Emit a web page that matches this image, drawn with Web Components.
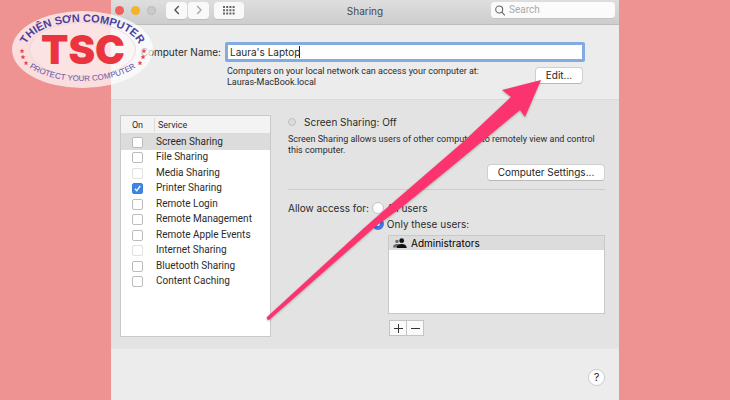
<!DOCTYPE html>
<html lang="en">
<head>
<meta charset="utf-8">
<title>Sharing</title>
<style>
  body { margin: 0; background: #ee9292; color: #2b2b2b; font: 10px/14px Inter, "Liberation Sans", sans-serif; --compact: Roboto, "Liberation Sans", sans-serif; }
</style>
</head>
<body>
<share-desktop></share-desktop>
<script>
const define = (name, html, setup) => customElements.define(name, class extends HTMLElement {
  constructor() {
    super();
    const t = document.createElement('template');
    t.innerHTML = html;
    const root = this.attachShadow({ mode: 'open' });
    root.append(t.content.cloneNode(true));
    if (setup) setup(root, this);
  }
});

define('push-button', `
<style>
  :host { display: inline-block; }
  button { box-sizing: border-box; width: 100%; height: 17px; padding: 0 9px; border: 1px solid #cfcfcf; border-bottom-color: #b9b9b9; border-radius: 4px; background: #fff; color: #1e1e1e; font: inherit; line-height: 15px; white-space: nowrap; }
</style>
<button type="button"><slot></slot></button>`);

define('title-bar', `
<style>
  :host { display: grid; grid-template-columns: 1fr auto 1fr; align-items: center; height: 24px; padding: 0 4px; border-bottom: 1px solid #bcbcbc; background: linear-gradient(#dedede, #cdcdcd); }
  .left { display: flex; align-items: center; padding-bottom: 3px; }
  .light { width: 9px; height: 9px; margin-right: 7px; border-radius: 50%; background: #f0605a; }
  .light.min { background: #f4b32f; }
  .light.off { box-sizing: border-box; background: #cbcbcb; border: 1px solid #b9b9b9; margin-right: 10px; }
  button { display: grid; place-items: center; box-sizing: border-box; height: 18px; width: 21px; padding: 0; border: 0; border-bottom: 1px solid #bdbdbd; border-radius: 4px; background: #f9f9f9; }
  button + button { margin-left: 1px; }
  button.grid { width: 30px; margin-left: 5px; }
  h1 { margin: 0; padding-bottom: 3px; font-size: 10px; font-weight: 400; color: #484848; }
  .search { justify-self: end; display: flex; align-items: center; gap: 4px; box-sizing: border-box; width: 124px; height: 17px; margin-bottom: 3px; padding: 0 4px; border-bottom: 1px solid #c4c4c4; border-radius: 4px; background: #fbfbfb; }
  input { flex: 1; min-width: 0; padding: 0; border: 0; outline: 0; background: none; font: inherit; font-family: var(--compact); }
  input::placeholder { color: #aaa; opacity: 1; }
</style>
<div class="left">
  <span class="light"></span><span class="light min"></span><span class="light off"></span>
  <button type="button" aria-label="Back"><svg width="8" height="12" viewBox="0 0 8 12" fill="none" stroke="#555" stroke-width="1.4"><path d="M5.8 2 2 6l3.8 4"/></svg></button>
  <button type="button" aria-label="Forward"><svg width="8" height="12" viewBox="0 0 8 12" fill="none" stroke="#a5a5a5" stroke-width="1.3"><path d="M2.2 2 6 6l-3.8 4"/></svg></button>
  <button type="button" class="grid" aria-label="Show all"><svg width="12" height="9" viewBox="0 0 12 9" fill="#666"><g id="r"><path d="M0 0h2v2H0zM3.2 0h2v2h-2zM6.4 0h2v2h-2zM9.6 0h2v2h-2z"/></g><use href="#r" y="3.2"/><use href="#r" y="6.4"/></svg></button>
</div>
<h1>Sharing</h1>
<div class="search"><svg width="10" height="11" viewBox="0 0 10 11" fill="none" stroke="#666" stroke-width="1.1"><circle cx="4.2" cy="4.5" r="3.5"/><path d="m6.8 7.2 3 3.2"/></svg><input type="search" placeholder="Search" aria-label="Search"></div>`);

define('computer-name', `
<style>
  :host { display: grid; grid-template-columns: 110px 1fr; column-gap: 4px; padding: 17px 34px 11px 0; border-bottom: 1px solid #dadada; }
  label { justify-self: end; line-height: 20px; white-space: nowrap; }
  .field { position: relative; }
  input { box-sizing: border-box; width: 100%; height: 20px; padding: 0 2px; border: 3px solid #82abdf; border-radius: 2px; outline: 0; background: #fff; color: inherit; font: inherit; }
  .caret { position: absolute; left: 74px; top: 4px; width: 1px; height: 12px; background: #222; }
  .info { grid-column: 2; display: flex; justify-content: space-between; align-items: start; padding: 4px 2px 0; }
  p { margin: 0; font: 9px/11px var(--compact); }
  push-button { width: 48px; margin-top: 1px; }
</style>
<label for="n">Computer Name:</label>
<div class="field"><input id="n" type="text" value="Laura's Laptop"><span class="caret"></span></div>
<div class="info"><p>Computers on your local network can access your computer at:<br>Lauras-MacBook.local</p><push-button>Edit...</push-button></div>`);

define('service-list', `
<style>
  :host { display: block; box-sizing: border-box; height: 222px; border: 1px solid #c9c9c9; background: #fff; font-family: var(--compact); }
  table { width: 100%; height: 173px; border-collapse: collapse; }
  th { height: 17px; padding: 0; background: #f3f3f3; border-bottom: 1px solid #dcdcdc; font-weight: 400; text-align: left; line-height: 14px; font-size: 9px; }
  th:first-child, td:first-child { width: 33px; text-align: center; }
  th span { display: block; padding-left: 3px; border-left: 1px solid #dcdcdc; }
  td { padding: 0; line-height: 14px; }
  td + td { padding-left: 2px; }
  tr.selected { background: #dcdcdc; }
  input { appearance: none; display: block; box-sizing: border-box; width: 11px; height: 11px; margin: 1px auto 0; border: 1px solid #bcbcbc; border-radius: 2px; background: #fff; }
  input:disabled { border-color: #e0e0e0; }
  input:checked { border-color: #3b80dc; background: #3f86e2 url("data:image/svg+xml,%3Csvg xmlns='http://www.w3.org/2000/svg' viewBox='0 0 9 9'%3E%3Cpath d='M2 4.8 3.8 6.8 7.2 1.8' fill='none' stroke='white' stroke-width='1.3'/%3E%3C/svg%3E"); }
</style>
<table><thead><tr><th>On</th><th><span>Service</span></th></tr></thead><tbody></tbody></table>`,
root => {
  const names = ['Screen Sharing', 'File Sharing', 'Media Sharing', 'Printer Sharing', 'Remote Login', 'Remote Management', 'Remote Apple Events', 'Internet Sharing', 'Bluetooth Sharing', 'Content Caching'];
  root.querySelector('tbody').innerHTML = names.map((n, i) =>
    `<tr${i === 0 ? ' class="selected"' : ''}><td><input type="checkbox" id="s${i}"${i === 3 ? ' checked' : ''}${i === 2 || i === 7 ? ' disabled' : ''}></td><td><label for="s${i}">${n}</label></td></tr>`).join('');
});

define('service-detail', `
<style>
  :host { display: block; }
  .status { display: flex; align-items: center; gap: 8px; }
  .status i { box-sizing: border-box; width: 8px; height: 8px; border: 1px solid #c0c0c0; border-radius: 50%; background: #dcdcdc; }
  p { margin: 5px 0 8px; font: 9px/11px var(--compact); }
  .settings { display: flex; justify-content: flex-end; padding-bottom: 8px; border-bottom: 1px solid #cdcdcd; }
  .settings push-button { width: 118px; }
  .access { display: grid; grid-template-columns: auto 1fr; column-gap: 3px; margin-top: 10px; line-height: 16px; }
  .choice { display: flex; align-items: center; gap: 3px; grid-column: 2; }
  input { appearance: none; box-sizing: border-box; width: 12px; height: 12px; margin: 0; border: 1px solid #c2c2c2; border-radius: 50%; background: #fff; }
  input:checked { border: 4px solid #3f78e4; }
  .users { box-sizing: border-box; height: 79px; margin: 3px 0 6px 100px; padding: 0; border: 1px solid #c9c9c9; background: #fff; list-style: none; }
  .users li { display: flex; align-items: center; gap: 4px; height: 14px; padding-left: 4px; background: #dcdcdc; color: #000; }
  .edit { display: flex; margin-left: 101px; }
  .edit button { display: grid; place-items: center; box-sizing: border-box; width: 18px; height: 16px; margin-right: -1px; padding: 0; border: 1px solid #c4c4c4; background: #fafafa; }
</style>
<div class="status"><i></i><span>Screen Sharing: Off</span></div>
<p>Screen Sharing allows users of other computers to remotely view and control this computer.</p>
<div class="settings"><push-button>Computer Settings...</push-button></div>
<div class="access" role="radiogroup" aria-labelledby="a">
  <span id="a">Allow access for:</span>
  <div class="choice"><input type="radio" name="who" id="all"><label for="all">All users</label></div>
  <div class="choice"><input type="radio" name="who" id="only" checked><label for="only">Only these users:</label></div>
</div>
<ul class="users"><li><svg width="14" height="10" viewBox="0 0 14 10"><g fill="#666"><circle cx="4" cy="3.4" r="1.7"/><path d="M0 9.5q0-3.5 4-3.5 2 0 3 1v2.5z"/></g><g fill="#111"><circle cx="8.7" cy="2.7" r="2.4"/><path d="M3.8 10q0-4 4.9-4t5 4z"/></g></svg>Administrators</li></ul>
<div class="edit">
  <button type="button" aria-label="Add"><svg width="10" height="10" stroke="#333"><path d="M1 5.5h9M5.5 1v9"/></svg></button>
  <button type="button" aria-label="Remove"><svg width="10" height="10" stroke="#333"><path d="M1 5.5h9"/></svg></button>
</div>`);

define('sharing-window', `
<style>
  :host { display: flex; flex-direction: column; min-height: 100vh; background: #ececec; }
  main { display: grid; grid-template-columns: 151px 1fr; column-gap: 17px; padding: 15px 14px 11px 9px; background: #e3e3e3; border-bottom: 1px solid #e7e7e7; }
  footer { display: flex; justify-content: flex-end; padding: 20px 14px 0; }
  footer button { box-sizing: border-box; width: 17px; height: 17px; padding: 0; border: 1px solid #cbcbcb; border-radius: 50%; background: #fff; color: #222; font: inherit; font-size: 11px; line-height: 15px; }
</style>
<title-bar></title-bar>
<computer-name></computer-name>
<main><service-list></service-list><service-detail></service-detail></main>
<footer><button type="button" aria-label="Help">?</button></footer>`);

define('brand-logo', `
<style>
  :host { display: block; }
  svg { display: block; overflow: visible; }
  text { font-family: "Liberation Sans", sans-serif; }
  .name { font-weight: 700; font-size: 11px; }
  .motto { font-size: 8px; }
  .mark { font: 900 40px Inter, sans-serif; }
</style>
<svg width="160" height="96" viewBox="0 0 160 96" role="img" aria-label="Thien Son Computer">
  <defs>
    <path id="top" d="M25 50A57 28 0 0 1 140 50"/>
    <path id="low" d="M19 54A64 31 0 0 0 146 54"/>
    <path id="star" d="M0-2.400.7-.7 2.4-.7 1.1.5 1.6 2.2 0 1.2-1.6 2.2-1.1.5-2.4-.7-.7-.7z"/>
  </defs>
  <ellipse cx="82.5" cy="49.5" rx="70.5" ry="38.5" fill="#fff" opacity=".7"/>
  <ellipse cx="82.5" cy="49.5" rx="53" ry="27" fill="#fff0f0" fill-opacity=".3" stroke="#e6d3da" stroke-width=".8"/>
  <text class="name" fill="#4a3fa0"><textPath href="#top" startOffset="50%" text-anchor="middle">THIÊN SƠN COMPUTER</textPath></text>
  <text class="motto" fill="#6555a5"><textPath href="#low" startOffset="50%" text-anchor="middle">PROTECT YOUR COMPUTER</textPath></text>
  <text class="mark" x="83" y="64" text-anchor="middle" fill="#ea3540">TSC</text>
  <g fill="#e44650"><use href="#star" x="22" y="51"/><use href="#star" x="23" y="57"/><use href="#star" x="26" y="63"/><use href="#star" x="144" y="51"/><use href="#star" x="143" y="57"/><use href="#star" x="140" y="63"/></g>
</svg>`);

define('callout-arrow', `
<style>
  :host { display: block; pointer-events: none; }
  svg { display: block; filter: drop-shadow(0 1px 1px #0004); }
</style>
<svg width="280" height="246" viewBox="264 77 280 246" aria-hidden="true">
  <path d="M541 80 502 90 511 97 463 142 389 206 364 228 267 317Q266 320 269 320L376 226 402 207 450 168 520 110 525 117Z" fill="#fb3470"/>
</svg>`);

define('share-desktop', `
<style>
  :host { display: block; position: relative; padding: 0 111px; }
  brand-logo { position: absolute; left: 0; top: 0; }
  callout-arrow { position: absolute; left: 264px; top: 77px; }
</style>
<sharing-window></sharing-window>
<brand-logo></brand-logo>
<callout-arrow></callout-arrow>`);
</script>
</body>
</html>
